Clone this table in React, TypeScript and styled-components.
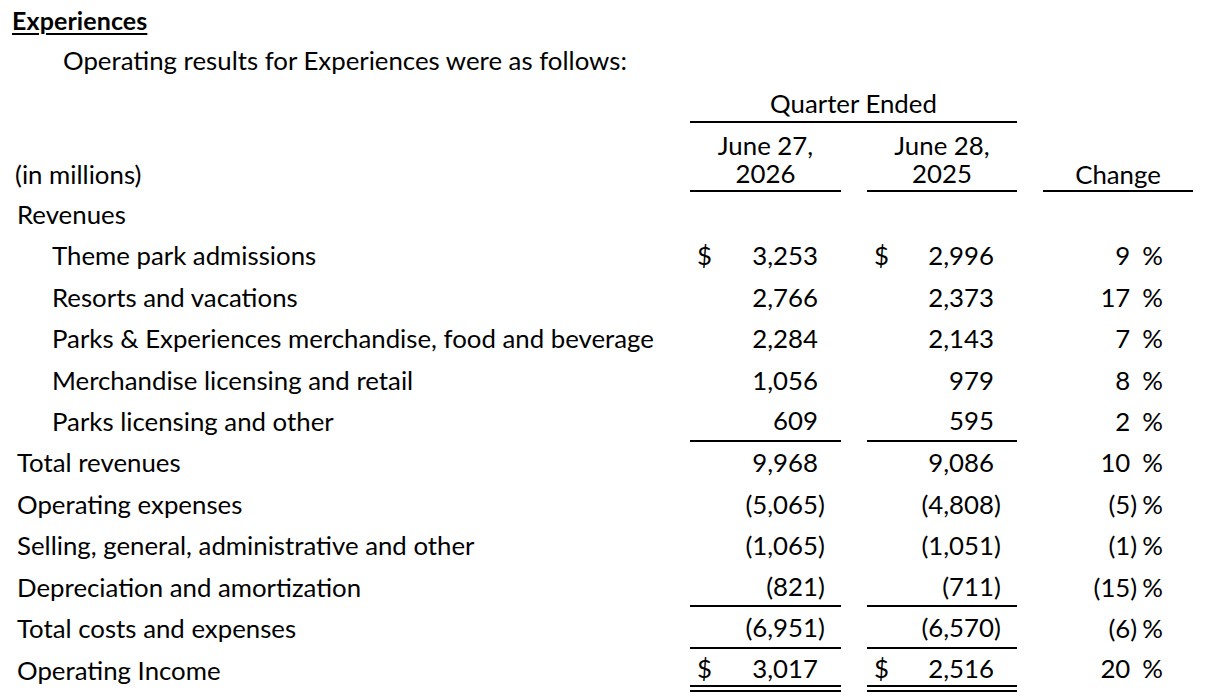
import React from "react";
import styled, { createGlobalStyle, css } from "styled-components";

const Global = createGlobalStyle`
  html, body { margin: 0; padding: 0; background: #ffffff; }
  * { box-sizing: border-box; }
`;

const Page = styled.div`
  width: 1206px;
  height: 697px;
  overflow: hidden;
  background: #ffffff;
  color: #000000;
  font-family: Lato, "Open Sans", "Liberation Sans", sans-serif;
  font-size: 25.8px;
  line-height: 28px;
`;

const TitleBar = styled.div`
  height: 40px;
  display: flex;
  align-items: center;
  padding-left: 12px;
`;

const Title = styled.span`
  font-weight: 700;
  font-size: 25px;
  letter-spacing: 0.1px;
  text-decoration: underline;
  text-decoration-thickness: 2px;
  text-underline-offset: 3px;
`;

const Intro = styled.div`
  height: 40px;
  display: flex;
  align-items: center;
  padding-left: 63px;
`;

const Row = styled.div<{ $h: number }>`
  display: grid;
  grid-template-columns: 664px 151px 150px 150px;
  column-gap: 26px;
  height: ${(p) => p.$h}px;
`;

const QuarterCell = styled.div`
  grid-column: 2 / 4;
  display: flex;
  align-items: flex-end;
  justify-content: center;
  padding-bottom: 4px;
  border-bottom: 2px solid #000;
`;

const HeadLabel = styled.div`
  display: flex;
  align-items: flex-end;
  padding-left: 15px;
  padding-bottom: 4px;
`;

const DateCell = styled.div`
  display: flex;
  flex-direction: column;
  align-items: center;
  justify-content: flex-end;
  text-align: center;
  padding-bottom: 3px;
  border-bottom: 2px solid #000;
`;

const ChangeHead = styled.div`
  display: flex;
  align-items: flex-end;
  justify-content: center;
  padding-bottom: 2px;
  border-bottom: 2px solid #000;
`;

const Body = styled.div`
  padding-top: 1.4px;
`;

const BodyRow = styled.div<{ $last?: boolean }>`
  display: grid;
  grid-template-columns: 664px 151px 150px 150px;
  column-gap: 26px;
  height: ${(p) => (p.$last ? 43.4 : 41.4)}px;
`;

const Label = styled.div<{ $indent?: boolean }>`
  display: flex;
  align-items: center;
  white-space: nowrap;
  padding-left: ${(p) => (p.$indent ? 52 : 17)}px;
`;

type Rule = "none" | "single" | "double";

const ruleCss = (r: Rule) => {
  if (r === "single") return css`border-bottom: 2px solid #000;`;
  if (r === "double")
    return css`
      border-bottom: 7px double #000;
      padding-top: 3px;
    `;
  return css``;
};

const NumCell = styled.div<{ $rule: Rule }>`
  display: flex;
  align-items: center;
  padding-left: 7px;
  padding-right: 15px;
  ${(p) => ruleCss(p.$rule)}
`;

const Dollar = styled.span`
  margin-right: auto;
`;

const Value = styled.span`
  margin-left: auto;
  white-space: nowrap;
`;

const Paren = styled.span`
  display: inline-block;
  width: 8px;
  text-align: left;
`;

const ChangeCell = styled.div<{ $last?: boolean }>`
  display: flex;
  align-items: center;
  justify-content: flex-end;
  padding-right: 30px;
  ${(p) => (p.$last ? css`padding-top: 3px; padding-bottom: 7px;` : "")}
`;

const Pct = styled.span`
  margin-left: 4px;
`;

type Line = {
  label: string;
  indent?: boolean;
  a?: string;
  b?: string;
  c?: string;
  dollar?: boolean;
  rule?: Rule;
};

const lines: Line[] = [
  { label: "Revenues" },
  { label: "Theme park admissions", indent: true, a: "3,253", b: "2,996", c: "9", dollar: true },
  { label: "Resorts and vacations", indent: true, a: "2,766", b: "2,373", c: "17" },
  { label: "Parks & Experiences merchandise, food and beverage", indent: true, a: "2,284", b: "2,143", c: "7" },
  { label: "Merchandise licensing and retail", indent: true, a: "1,056", b: "979", c: "8" },
  { label: "Parks licensing and other", indent: true, a: "609", b: "595", c: "2", rule: "single" },
  { label: "Total revenues", a: "9,968", b: "9,086", c: "10" },
  { label: "Operating expenses", a: "(5,065)", b: "(4,808)", c: "(5)" },
  { label: "Selling, general, administrative and other", a: "(1,065)", b: "(1,051)", c: "(1)" },
  { label: "Depreciation and amortization", a: "(821)", b: "(711)", c: "(15)", rule: "single" },
  { label: "Total costs and expenses", a: "(6,951)", b: "(6,570)", c: "(6)", rule: "single" },
  { label: "Operating Income", a: "3,017", b: "2,516", c: "20", dollar: true, rule: "double" },
];

const split = (v: string) =>
  v.endsWith(")") ? { main: v.slice(0, -1), close: ")" } : { main: v, close: "" };

const Amount: React.FC<{ v?: string; dollar?: boolean; rule: Rule }> = ({ v, dollar, rule }) => {
  if (!v) return <NumCell $rule="none" />;
  const { main, close } = split(v);
  return (
    <NumCell $rule={rule}>
      {dollar && <Dollar>$</Dollar>}
      <Value>{main}</Value>
      <Paren>{close}</Paren>
    </NumCell>
  );
};

const Change: React.FC<{ v?: string; last?: boolean }> = ({ v, last }) => {
  if (!v) return <ChangeCell />;
  const { main, close } = split(v);
  return (
    <ChangeCell $last={last}>
      <Value>{main}</Value>
      <Paren>{close}</Paren>
      <Pct>%</Pct>
    </ChangeCell>
  );
};

export default function App() {
  return (
    <Page>
      <Global />
      <TitleBar>
        <Title>Experiences</Title>
      </TitleBar>
      <Intro>Operating results for Experiences were as follows:</Intro>
      <Row $h={43}>
        <div />
        <QuarterCell>Quarter Ended</QuarterCell>
      </Row>
      <Row $h={69}>
        <HeadLabel>(in millions)</HeadLabel>
        <DateCell>
          <span>June 27,</span>
          <span>2026</span>
        </DateCell>
        <DateCell>
          <span>June 28,</span>
          <span>2025</span>
        </DateCell>
        <ChangeHead>Change</ChangeHead>
      </Row>
      <Body>
        {lines.map((l, i) => {
          const rule = l.rule ?? "none";
          const last = rule === "double";
          return (
            <BodyRow key={i} $last={last}>
              <Label $indent={l.indent}>{l.label}</Label>
              <Amount v={l.a} dollar={l.dollar} rule={rule} />
              <Amount v={l.b} dollar={l.dollar} rule={rule} />
              <Change v={l.c} last={last} />
            </BodyRow>
          );
        })}
      </Body>
    </Page>
  );
}
